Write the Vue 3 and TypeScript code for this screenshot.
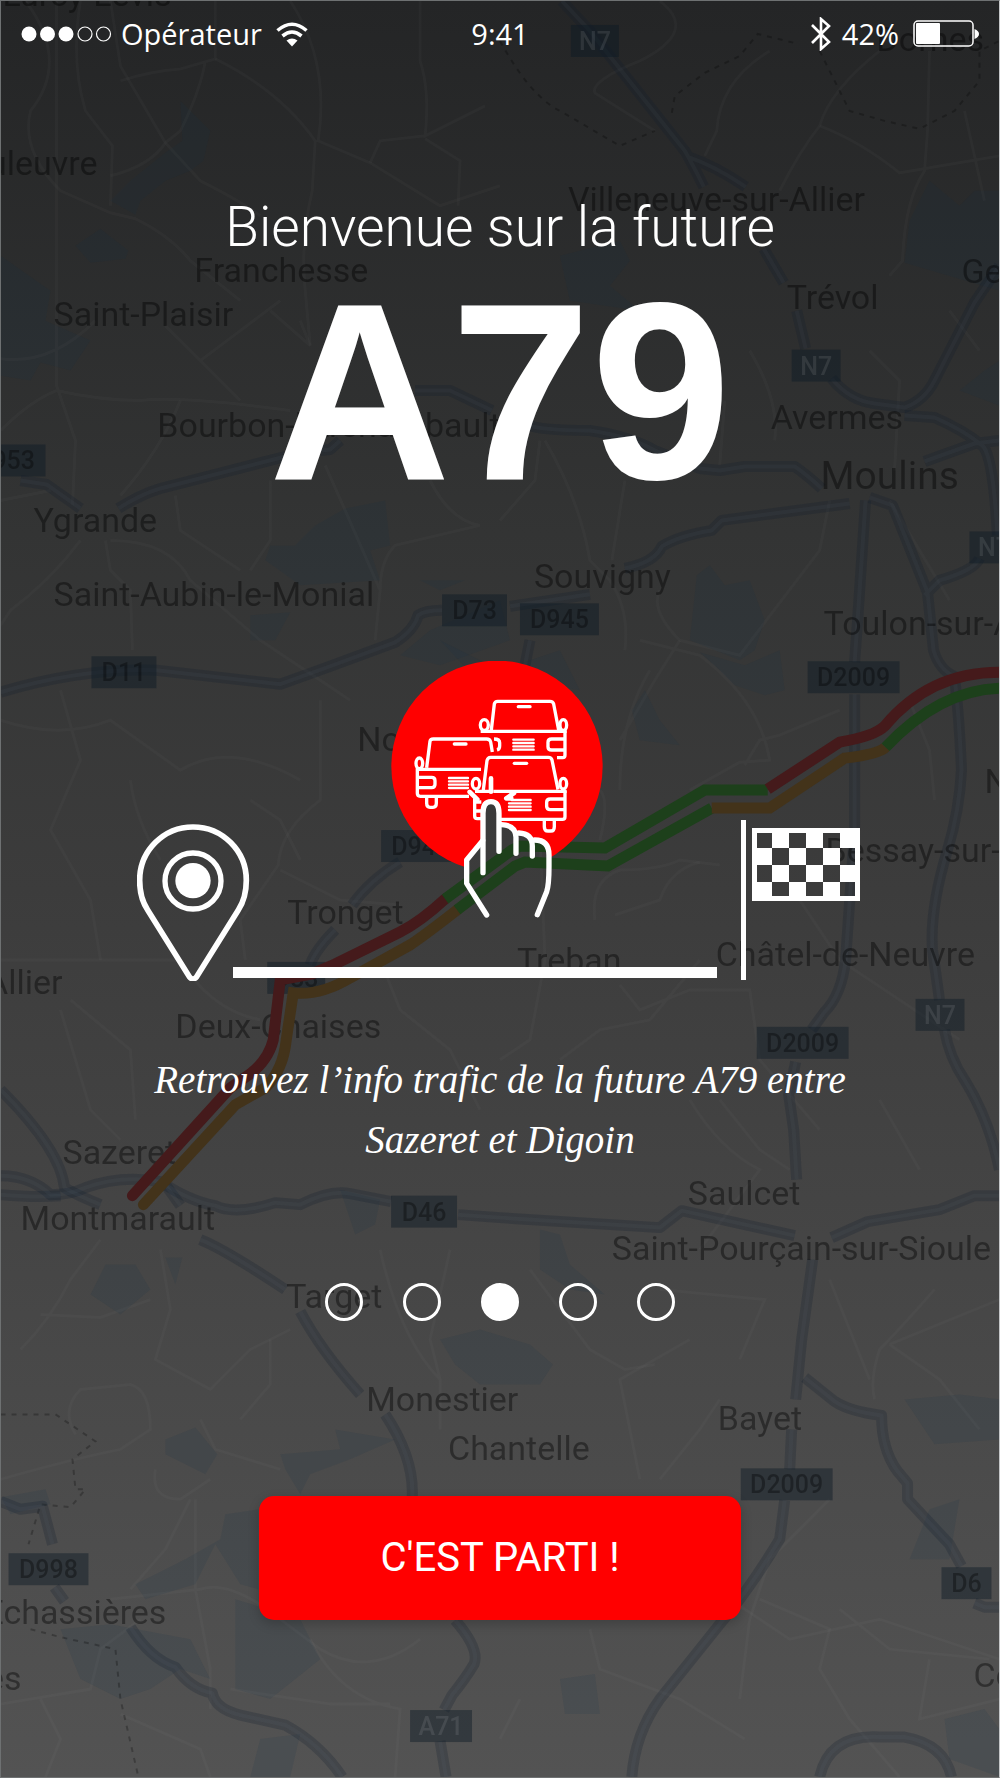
<script setup lang="ts">
import { ref } from 'vue'

interface Label {
  text: string
  x: number
  y: number
  size?: number
  anchor?: 'start' | 'end'
}

interface Shield {
  text: string
  x: number
  y: number
  w: number
  national?: boolean
}

const step = ref(2)
const steps = [0, 1, 2, 3, 4]

const labels: Label[] = [
  { text: 'Lurcy-Lévis', x: 2, y: 5 },
  { text: 'Couleuvre', x: 97, y: 174, anchor: 'end' },
  { text: 'Dornes', x: 877, y: 50 },
  { text: 'Villeneuve-sur-Allier', x: 568, y: 210 },
  { text: 'Franchesse', x: 194, y: 281 },
  { text: 'Gennetines', x: 962, y: 282 },
  { text: 'Trévol', x: 787, y: 308 },
  { text: 'Saint-Plaisir', x: 53, y: 325 },
  { text: "Bourbon-l'Archambault", x: 157, y: 436 },
  { text: 'Avermes', x: 771, y: 428 },
  { text: 'Moulins', x: 821, y: 489, size: 39 },
  { text: 'Ygrande', x: 33, y: 532 },
  { text: 'Souvigny', x: 534, y: 588 },
  { text: 'Saint-Aubin-le-Monial', x: 53, y: 606 },
  { text: 'Toulon-sur-Allier', x: 824, y: 635 },
  { text: 'Noyant', x: 357, y: 751 },
  { text: 'Neuilly', x: 985, y: 793 },
  { text: 'Bessay-sur-Allier', x: 826, y: 862 },
  { text: 'Tronget', x: 287, y: 924 },
  { text: 'Treban', x: 517, y: 972 },
  { text: 'Châtel-de-Neuvre', x: 716, y: 966 },
  { text: 'Allier', x: 62, y: 994, anchor: 'end' },
  { text: 'Deux-Chaises', x: 175, y: 1038 },
  { text: 'Sazeret', x: 62, y: 1164 },
  { text: 'Montmarault', x: 20, y: 1230 },
  { text: 'Saulcet', x: 688, y: 1205 },
  { text: 'Saint-Pourçain-sur-Sioule', x: 612, y: 1260 },
  { text: 'Target', x: 286, y: 1308 },
  { text: 'Monestier', x: 366, y: 1412 },
  { text: 'Bayet', x: 718, y: 1431 },
  { text: 'Chantelle', x: 448, y: 1461 },
  { text: 'Échassières', x: 166, y: 1625, anchor: 'end' },
  { text: 'Veauces', x: 21, y: 1691, anchor: 'end' },
  { text: 'Cognat', x: 974, y: 1688 },
]

const shields: Shield[] = [
  { text: 'N7', x: 571, y: 24, w: 48, national: true },
  { text: 'N7', x: 792, y: 349, w: 49, national: true },
  { text: 'D953', x: -35, y: 444, w: 80 },
  { text: 'N7', x: 970, y: 531, w: 49, national: true },
  { text: 'D73', x: 442, y: 594, w: 65 },
  { text: 'D945', x: 520, y: 603, w: 79 },
  { text: 'D11', x: 91, y: 656, w: 65 },
  { text: 'D2009', x: 808, y: 661, w: 92 },
  { text: 'D945', x: 381, y: 830, w: 79 },
  { text: 'D33', x: 267, y: 962, w: 58 },
  { text: 'N7', x: 916, y: 999, w: 49, national: true },
  { text: 'D2009', x: 757, y: 1027, w: 92 },
  { text: 'D46', x: 391, y: 1196, w: 66 },
  { text: 'D2009', x: 741, y: 1469, w: 92 },
  { text: 'D998', x: 8, y: 1554, w: 80 },
  { text: 'D6', x: 942, y: 1568, w: 50 },
  { text: 'A71', x: 410, y: 1711, w: 62, national: true },
]

const roads: string[] = [
  'M562 0 L590 30 L685 150 Q692 162 704 186 M688 156 Q715 165 746 186',
  'M764 248 L784 282 M797 310 L806 348 M832 378 Q850 400 875 403 L905 407 Q925 400 935 380 L975 302 L1000 265',
  'M905 415 L935 417 Q965 430 984 446 Q994 460 998 535 M925 461 L975 443 L1000 440',
  'M415 390 H450 L492 410 M526 424 Q540 430 590 430 Q630 436 655 450 L700 468 L720 470 L745 466 H795 Q808 475 822 488',
  'M20 480 L46 484 L80 508 M118 508 Q140 494 160 488 L285 456 M320 450 L330 449 L340 440',
  'M850 503 L722 520 L712 530 Q680 535 662 546 Q655 562 625 568 M590 594 L510 606 M442 610 Q425 610 418 615 Q414 630 395 642 L330 666 L280 684 L156 670 Q80 668 0 692',
  'M866 500 L858 620 L855 662 M855 694 V830 L846 960 Q842 995 825 1012 L812 1030 M796 1062 L789 1095 L794 1130 L797 1180 M813 1260 L802 1340 L796 1400 M792 1430 L790 1470 M785 1501 L780 1540 Q750 1590 720 1625 L660 1700 Q635 1735 632 1778',
  'M870 497 L893 505 L928 592 L934 650 Q940 670 955 676 Q960 720 962 770 Q960 810 948 850 Q930 910 933 950 L940 1000 M945 1030 Q950 1058 965 1080 Q990 1120 1000 1170 M925 595 L940 580 Q975 570 980 558',
  'M0 1176 Q30 1176 50 1195 Q70 1195 85 1188 Q120 1175 160 1182 Q190 1202 215 1206 Q235 1216 275 1203 L300 1205 Q330 1190 350 1194 L391 1202 M458 1215 L500 1218 L660 1228 L682 1211 L795 1236 M832 1238 L868 1222 L940 1210 L975 1196 H1000',
  'M0 1090 Q60 1150 64 1188 Q75 1195 100 1205 M0 1195 Q35 1198 60 1196 M165 1185 L180 1206 M200 1240 Q225 1250 285 1290 M300 1312 Q320 1350 360 1395 M385 1415 Q415 1460 412 1500 M455 1621 Q480 1650 474 1665 Q465 1680 452 1696 L444 1711 M440 1742 L446 1778',
  'M0 1502 L20 1510 L42 1507 L52 1545 M54 1588 L64 1602 M130 1628 Q150 1660 175 1668 Q190 1690 212 1694 Q215 1710 240 1716 L285 1726 Q320 1745 342 1778',
  'M805 1378 L835 1402 Q850 1412 882 1416 Q882 1450 898 1472 L908 1484 V1500 L950 1545 L962 1567 M975 1604 L985 1608 H1000 M820 1778 Q830 1735 880 1738 H905 Q945 1745 952 1778',
  'M400 862 Q370 880 352 905 M335 930 Q315 950 310 965 M530 640 L525 665',
]

const lanes: string[] = [
  'M25 0 Q70 60 30 110 Q20 150 60 190 L110 212 L135 218 Q170 235 190 260 L240 300',
  'M80 0 Q70 60 85 110 L112 145 L110 205 M110 0 L120 65 L165 142 L200 180 Q240 200 260 215',
  'M120 80 Q150 70 180 68 L215 58 L215 0 M205 60 Q200 90 180 130 L165 142 Q150 165 110 175',
  'M215 58 Q280 90 315 140 L312 190 Q300 240 305 290 L310 345 M290 0 Q330 60 318 140 L370 162 L440 205 L500 185',
  'M420 0 V60 Q430 90 425 135 L485 105 M425 135 L380 140 L370 162 M425 138 L460 160 L458 205',
  'M660 0 Q700 30 640 60 Q590 80 595 92 L655 130 M770 50 Q720 80 717 130 L705 155 M880 50 Q830 90 820 125 Q800 150 780 190',
  'M930 50 L928 130 L925 170 Q905 200 903 260 L890 275 M820 125 Q860 140 900 172 L1000 155 M965 110 L985 200',
  'M0 358 Q50 365 95 320 M56 0 V385 L75 440 L72 505 M56 390 Q100 400 140 400 Q180 395 290 410 M0 430 Q30 400 56 390',
  'M300 320 L310 345 L270 310 M200 360 L280 300 M165 325 L240 400 M180 400 Q160 450 120 495 M0 500 L50 490',
  'M80 540 Q50 580 10 610 L0 625 M105 540 L110 570 L130 590 L132 650 M110 540 Q170 540 190 580 L260 640 L350 700',
  'M270 480 V540 L250 570 M175 495 L180 530 L240 570 M325 465 L345 510 L380 590 L375 640 M430 480 Q450 520 480 525 L395 545 Q380 560 380 590',
  'M540 440 L535 480 L500 520 M545 440 Q580 500 590 560 L610 580 Q630 610 625 650 M625 480 L612 560 M660 590 Q650 610 680 640 L740 655 L820 550 L830 500',
  'M750 350 Q780 400 775 440 M870 350 L900 380 L895 470 M725 400 L720 465 M950 310 L980 350 M890 500 L950 600',
  'M0 720 Q60 740 110 720 L180 770 Q230 740 300 780 M60 690 L80 760 L50 830 L90 900 L100 960 M250 800 L280 820 L300 860',
  'M130 780 Q135 820 160 860 M320 700 V800 Q280 830 278 865 L240 920 L245 960 M280 870 L340 900 L400 905',
  'M60 1010 L90 1110 L120 1140 M70 1000 L130 1050 L135 1120 M0 960 L60 960 L180 960 Q210 1010 260 1020 M380 960 L400 1010 L450 1050 L480 1110',
  'M640 640 L700 655 Q760 700 770 760 L740 762 L690 790 M650 670 Q620 720 620 790 M680 640 L655 680 L620 740 M745 765 L760 740 L780 735 L840 710',
  'M600 840 Q610 800 600 790 M595 920 Q590 880 620 870 Q660 870 680 860 L720 865 M540 830 L545 960 L530 1040 L500 1060',
  'M615 915 L660 900 Q670 870 700 862 M620 985 L640 1010 L690 990 H750 L760 1060 L820 1130 M560 1060 L600 1030 L650 1020 L700 960',
  'M910 700 L930 750 L935 800 M800 900 L840 960 L900 1000 L960 1040 M880 1100 L920 1170 M720 1100 L760 1150 L790 1170',
  'M20 1350 Q50 1320 70 1280 L100 1240 M40 1315 L100 1318 L150 1300 M160 1250 L170 1310 L155 1360 L210 1390 L250 1350 L290 1330',
  'M0 1480 Q70 1460 120 1450 L150 1430 Q150 1390 130 1385 L80 1390 Q60 1410 75 1435 M270 1340 L270 1385 L240 1420 M200 1420 L215 1450 L280 1470 M210 1480 L180 1500 Q150 1500 155 1470',
  'M190 1500 L165 1550 L130 1590 M195 1500 V1590 L210 1670 V1710 M110 1600 L200 1590 Q230 1580 280 1620 L320 1650 Q370 1680 420 1640',
  'M0 1705 L90 1690 L100 1650 L140 1620 M40 1700 L60 1740 L45 1778 M120 1715 L200 1750 L210 1778 M230 1690 L330 1705 L390 1705 M310 1640 Q340 1700 400 1710 L395 1778',
  'M450 1250 L430 1340 L440 1380 M380 1250 Q400 1340 440 1380 L440 1430 M530 1270 L590 1350 L625 1370 L655 1365 M690 1100 Q720 1150 760 1170 L700 1250',
  'M830 1280 L870 1380 M935 1290 Q900 1330 880 1350 Q870 1380 875 1400 M890 1345 L940 1380 L980 1430 M1000 1300 L890 1345 M660 1290 L765 1300 L740 1360',
  'M640 1480 L620 1380 L690 1340 M660 1480 L700 1430 L720 1400 M830 1500 L770 1560 L750 1620 L740 1700 M760 1600 L830 1630 L820 1670 L850 1720 L900 1778',
  'M590 1630 L600 1670 L680 1700 L745 1740 M730 1600 L790 1640 L880 1620 L1000 1660 M840 1610 L890 1650 L990 1660 M930 1660 L920 1720 L1000 1700 M520 1700 L500 1740',
]

const patches: string[] = [
  'M180 100 L195 115 L210 130 L203 160 L190 170 L165 180 L140 200 L135 214 L110 200 L130 180 L165 152 L182 140Z',
  'M100 228 L128 250 L125 258 L90 262 L75 245Z M0 255 L50 290 L45 320 L90 340 L70 370 L40 362 L30 380 L0 375Z',
  'M930 180 L960 205 L975 190 L1000 190 V290 L905 262 L910 220Z M560 255 L620 240 L630 260 L610 285 L640 310 L570 300Z',
  'M315 525 L345 508 L385 500 L390 545 L370 550 L380 580 L300 585 L265 560 L270 545 L295 545Z',
  'M250 615 L290 612 L275 640 H250Z M430 630 L500 600 L510 640 L440 665 L400 655Z',
  'M697 575 L710 565 L725 585 L750 580 L765 620 L755 650 L740 660 L690 640Z M465 580 L440 590 L420 580Z',
  'M700 652 L745 665 L780 650 L785 690 L765 695 L735 685 L720 670Z M632 710 L645 690 L660 720 L680 745 L640 740Z',
  'M105 1265 L135 1265 L150 1290 L120 1315 L90 1295Z M165 1258 H182 L175 1285Z M340 1190 L380 1200 L375 1225 L355 1235Z',
  'M440 1340 L480 1330 L530 1345 L553 1365 L540 1385 H480 L455 1365Z M540 1230 L560 1235 L570 1265 L605 1295 L570 1290 L540 1270Z',
  'M165 1440 L195 1428 L217 1455 L205 1475 L165 1455Z M280 1455 L340 1450 L335 1430 L395 1440 L350 1460 L310 1475 L300 1495 L285 1470Z',
  'M225 1515 L258 1510 V1590 L240 1585 L215 1545 L195 1585 L145 1600 L135 1585 L185 1560 L220 1540Z',
  'M60 1630 L110 1625 L190 1640 L210 1680 L180 1670 L150 1690 L120 1700 L80 1680Z M235 1600 L300 1620 L320 1660 L270 1700 L235 1690Z',
  'M905 1400 L960 1395 L1000 1400 V1440 L935 1445Z M930 1510 L960 1500 L950 1560 L910 1560Z M560 1680 L595 1675 L600 1715 L565 1715Z',
  'M945 1720 L985 1710 L1000 1730 V1778 L950 1760Z M260 1740 L300 1735 L290 1778 H250Z M440 640 L500 670 L560 650 L580 690 L470 672Z',
  'M960 390 L985 370 L1000 360 V405Z M0 1498 L45 1490 L50 1505 L10 1515Z',
]

/* Edges of the squares on the chequered flag */
const cols = [757, 772, 789, 806, 823, 840, 855]
const rows = [833, 848, 865, 882, 896]
const squares = rows.slice(0, -1).flatMap((top, r) =>
  cols.slice(0, -1).flatMap((left, c) =>
    (r + c) % 2 === 0 ? [`M${left} ${top}H${cols[c + 1]}V${rows[r + 1]}H${left}Z`] : [],
  ),
)
const flagPath = `M752 828H860V901H752Z${squares.join('')}`
</script>

<template>
  <main class="screen">
    <svg class="map" viewBox="0 0 1000 1778" preserveAspectRatio="xMidYMid slice" aria-hidden="true">
      <path v-for="d in patches" :key="d" :d="d" class="patch" />
      <path v-for="d in lanes" :key="d" :d="d" class="lane" />
      <g class="limit">
        <path d="M672 112 L675 95 L705 72 L740 55 L758 33 L795 42 M820 50 L850 110 L885 120 L920 128 L955 110 L980 80 V50 L1000 40" />
        <path d="M500 40 Q530 95 560 110 L620 145 L655 130" />
        <path d="M0 1415 L55 1415 L95 1442 L72 1460 L75 1490 L85 1490 L70 1508 L40 1505 L28 1545" />
        <path d="M30 1630 L60 1638 L115 1650 L120 1700 L138 1778" />
      </g>
      <path v-for="d in roads" :key="d" :d="d" class="road" />
      <path v-for="d in roads" :key="'c' + d" :d="d" class="road-core" />
      <text
        v-for="l in labels"
        :key="l.text"
        :x="l.x"
        :y="l.y"
        :font-size="l.size ?? 34"
        :text-anchor="l.anchor ?? 'start'"
        class="place"
      >{{ l.text }}</text>
      <g v-for="s in shields" :key="s.text + s.y" :class="['shield', { national: s.national }]">
        <rect :x="s.x" :y="s.y" :width="s.w" height="32" />
        <text :x="s.x + s.w / 2" :y="s.y + 25">{{ s.text }}</text>
      </g>
      <g class="traffic">
        <path class="jam" stroke-linecap="round" d="M132 1196 L230 1088 L250 1074 Q268 1060 273 1040 L280 980 L312 974 L335 964 L400 932 Q420 922 445 899" />
        <path class="slow" stroke-linecap="round" d="M143 1205 L235 1105 L265 1088 Q283 1070 286 1040 L293 993 Q320 996 350 978 L410 945 Q425 935 457 910" />
        <path class="free" d="M445 899 L512 850 L520 846 L605 848 L705 790 H768" />
        <path class="free" d="M457 910 L515 866 L525 862 L608 866 L712 808" />
        <path class="slow" d="M712 808 H770 L845 758 Q880 754 886 747" />
        <path class="jam" d="M768 789 L840 742 Q875 736 885 726 Q930 672 1000 672" />
        <path class="free" d="M886 747 Q940 690 1000 688" />
      </g>
    </svg>

    <header class="status">
      <div class="carrier">
        <svg class="signal" viewBox="0 0 92 16" role="img" aria-label="Signal 3 sur 5">
          <g fill="#fff"><circle cx="8" cy="8" r="7.5" /><circle cx="26.5" cy="8" r="7.5" /><circle cx="45" cy="8" r="7.5" /></g>
          <g fill="none" stroke="#fff" stroke-width="1.2"><circle cx="64" cy="8" r="7" /><circle cx="82.5" cy="8" r="7" /></g>
        </svg>
        <span>Opérateur</span>
        <svg class="wifi" viewBox="0 0 32 25" role="img" aria-label="Wi-Fi">
          <g fill="none" stroke="#fff" stroke-width="3.6">
            <path d="M1.5 8.500 Q16 -4 30.500 8.500" />
            <path d="M6.500 14 Q16 6 25.500 14" />
          </g>
          <path fill="#fff" d="M10.500 18.500 Q16 14.500 21.500 18.500 L16 24.500Z" />
        </svg>
      </div>
      <time class="clock">9:41</time>
      <div class="power">
        <svg class="bluetooth" viewBox="0 0 22 34" role="img" aria-label="Bluetooth">
          <path d="M2 8 L19 25 L11 32 V2 L19 9 L2 26" fill="none" stroke="#fff" stroke-width="2.6" />
        </svg>
        <span>42%</span>
        <svg class="battery" viewBox="0 0 66 28" role="img" aria-label="Batterie">
          <rect x="1" y="1" width="59" height="25" rx="4" fill="none" stroke="#fff" stroke-width="1.5" />
          <rect x="3" y="3" width="24" height="21" rx="1" fill="#fff" />
          <path d="M61.500 9 Q66 11 66 14 Q66 17 61.500 19Z" fill="#fff" />
        </svg>
      </div>
    </header>

    <h1 class="title">
      <span class="lead">Bienvenue sur la future</span>
      <span class="name">A79</span>
    </h1>

    <svg class="journey" viewBox="137 661 726 320" role="img" aria-label="Trajet avec info trafic">
      <defs>
        <mask id="hand-cut" maskUnits="userSpaceOnUse" x="0" y="0" width="750" height="870">
          <rect width="750" height="870" fill="#fff" />
          <path d="M350 825 L290 730 V660 L338 600 V520 Q339 488 363 488 Q387 488 387 520 V553 Q438 553 438 578 Q487 578 487 600 Q537 600 537 645 V735 L502 824Z" fill="#000" />
        </mask>
      </defs>

      <g transform="translate(120 800) scale(.3333)" fill="none" stroke="#fff">
        <path stroke-width="17" d="M219 81 A160 160 0 0 1 379 241 C379 285 365 315 355 330 L230 530 Q219 544 208 530 L83 330 C73 315 59 285 59 241 A160 160 0 0 1 219 81Z" />
        <circle cx="219" cy="243" r="84" stroke-width="16" />
        <circle cx="219" cy="242" r="53" fill="#fff" stroke="none" />
      </g>

      <rect x="233" y="967" width="484" height="11" fill="#fff" />
      <rect x="741" y="820" width="5" height="160" fill="#fff" />
      <path :d="flagPath" fill="#fff" fill-rule="evenodd" />

      <g transform="translate(370 640) scale(.3333)" fill="none" stroke="#fff" stroke-linecap="round" stroke-linejoin="round">
        <circle cx="381" cy="379" r="317" fill="#f00" stroke="none" mask="url(#hand-cut)" />
        <g stroke-width="10">
          <g stroke-linecap="butt">
            <path d="M364 270 L373 192 Q375 184 383 184 H540 Q549 184 551 192 L566 270 M332 274 H590" />
            <ellipse cx="343" cy="255" rx="12" ry="16" />
            <ellipse cx="580" cy="255" rx="10" ry="16" />
            <path d="M585 272 V345 Q585 353 578 353 H561 M585 297 H545 Q534 297 534 307 V320 Q534 330 545 330 H585 M372 297 Q389 297 389 308 V318 Q389 328 381 330" />
          </g>
          <path stroke-width="10" d="M445 200 H480" />
          <path stroke-width="7" d="M430 299 H491 M430 309 H491 M430 319 H491 M430 329 H491" />
        </g>
        <g stroke-width="10">
          <g stroke-linecap="butt">
            <path d="M170 383 L180 304 Q181 297 190 297 H350 Q360 297 362 306 L367 336 M138 388 H333" />
            <ellipse cx="148" cy="370" rx="10" ry="16" />
            <path d="M142 385 V460 Q142 469 151 469 H297 M142 412 H185 Q195 412 195 422 V433 Q195 443 185 443 H142 M170 472 V490 Q170 502 180 502 H189 Q199 502 199 490 V472" />
          </g>
          <path stroke-width="10" d="M253 312 H288" />
          <path stroke-width="7" d="M237 414 H294 M237 424 H294 M237 434 H294 M237 444 H294" />
        </g>
        <g stroke-width="10">
          <g stroke-linecap="butt">
            <path d="M340 450 L351 362 Q353 352 362 352 H535 Q544 352 546 360 L564 448 M315 454 H358 M370 454 H590" />
            <ellipse cx="318" cy="431" rx="11" ry="16" />
            <ellipse cx="580" cy="431" rx="10" ry="16" />
            <path d="M585 452 V530 Q585 538 577 538 H392 M314 475 V528 Q314 536 322 536 H334 M585 477 H541 Q530 477 530 487 V499 Q530 509 541 509 H585 M314 486 H334 M314 513 H334 M523 540 V560 Q523 573 534 573 H543 Q553 573 553 560 V540" />
          </g>
          <path stroke-width="10" d="M433 370 H470" />
          <path stroke-width="7" d="M425 480 H482 M417 490 H482 M417 500 H482 M417 510 H482" />
        </g>
        <path stroke-width="14" d="M363 415 V455 M299 456 L322 478 M432 459 L409 475 H424" />
        <g stroke-width="16">
          <path d="M350 825 L290 730 V660 L338 602" />
          <path d="M339 698 V520 Q339 485 363 485 Q387 485 387 520 V634" />
          <path d="M394 554 Q438 556 438 592 V640 M446 579 Q487 581 487 618 V648" />
          <path d="M494 600 Q537 600 537 645 V680 Q537 735 530 755 L502 824" />
        </g>
      </g>
    </svg>

    <p class="caption">Retrouvez l’info trafic de la future A79 entre Sazeret et Digoin</p>

    <div class="steps" role="radiogroup" aria-label="Étapes">
      <input
        v-for="s in steps"
        :key="s"
        v-model="step"
        type="radio"
        name="step"
        :value="s"
        :aria-label="`Étape ${s + 1}`"
      />
    </div>

    <button type="button" class="start">C'EST PARTI !</button>
  </main>
</template>

<style>
body {
  margin: 0;
  background: #525252;
}
</style>

<style scoped>
.screen {
  position: relative;
  box-sizing: border-box;
  display: flex;
  flex-direction: column;
  align-items: center;
  min-height: 100vh;
  padding-bottom: 150px;
  overflow: hidden;
  border: 1px solid #6e7172;
  border-right-color: #c4c6c8;
  background: linear-gradient(#242526, #333434 30%, #3c3c3c 50%, #535353);
  color: #fff;
  font-family: Roboto, "Liberation Sans", sans-serif;
}

.map {
  position: absolute;
  inset: 0;
  width: 100%;
  height: 100%;
}

.patch {
  fill: #14304c;
  opacity: 0.12;
}

.lane {
  fill: none;
  stroke: #fff;
  stroke-width: 3;
  opacity: 0.025;
}

.limit {
  fill: none;
  stroke: #000;
  stroke-width: 2;
  stroke-dasharray: 5 6;
  opacity: 0.25;
}

.road {
  fill: none;
  stroke: #101f2c;
  stroke-width: 11;
  stroke-linejoin: round;
  opacity: 0.24;
}

.road-core {
  fill: none;
  stroke: #8fa3b3;
  stroke-width: 4;
  stroke-linejoin: round;
  opacity: 0.05;
}

.place {
  fill: #000;
  opacity: 0.4;
}

.shield rect {
  fill: #0c1824;
  opacity: 0.44;
}

.shield text {
  fill: #000;
  font-size: 25px;
  font-weight: 500;
  text-anchor: middle;
  opacity: 0.34;
}

.shield.national text {
  fill: #fff;
  opacity: 0.09;
}

.traffic {
  fill: none;
  stroke-width: 11;
}

.jam {
  stroke: #451a1b;
}

.slow {
  stroke: #43331a;
}

.free {
  stroke: #1d401b;
}

.status {
  position: relative;
  box-sizing: border-box;
  display: grid;
  grid-template-columns: 1fr auto 1fr;
  align-items: center;
  width: 100%;
  height: 66px;
  padding: 0 20px;
  font-family: "Open Sans", "Noto Sans", sans-serif;
  font-size: 29px;
  line-height: 40px;
}

.carrier,
.power {
  display: flex;
  align-items: center;
}

.power {
  justify-content: flex-end;
}

.signal {
  width: 92px;
  height: 16px;
  margin-right: 8px;
}

.wifi {
  width: 32px;
  height: 25px;
  margin-left: 14px;
}

.bluetooth {
  width: 22px;
  height: 34px;
  margin-right: 10px;
}

.battery {
  width: 66px;
  height: 28px;
  margin-left: 14px;
}

.title {
  position: relative;
  display: flex;
  flex-direction: column;
  align-items: center;
  gap: 8px;
  margin: 128px 0 0;
  font-weight: 400;
}

.lead {
  font-size: 55px;
  font-weight: 350;
  line-height: 64px;
}

.name {
  font-family: "Liberation Sans", Arial, sans-serif;
  font-size: 252px;
  font-weight: 700;
  line-height: 250px;
}

.journey {
  position: relative;
  width: 726px;
  max-width: 100%;
  height: auto;
  margin-top: 144px;
}

.caption {
  position: relative;
  max-width: 720px;
  margin: 69px 0 0;
  font-family: "Liberation Serif", serif;
  font-size: 39px;
  font-style: italic;
  line-height: 60px;
  text-align: center;
}

.steps {
  position: relative;
  display: flex;
  gap: 40px;
  margin-top: 113px;
}

.steps input {
  appearance: none;
  width: 38px;
  height: 38px;
  margin: 0;
  border: 3px solid #fff;
  border-radius: 50%;
}

.steps input:checked {
  background: #fff;
}

.start {
  position: relative;
  width: 482px;
  max-width: 90%;
  height: 124px;
  margin-top: 175px;
  border: 0;
  border-radius: 15px;
  background: #f00;
  box-shadow: 0 4px 12px rgba(0, 0, 0, 0.2);
  color: #fff;
  font-family: Roboto, "Liberation Sans", sans-serif;
  font-size: 40px;
  line-height: 48px;
}
</style>
